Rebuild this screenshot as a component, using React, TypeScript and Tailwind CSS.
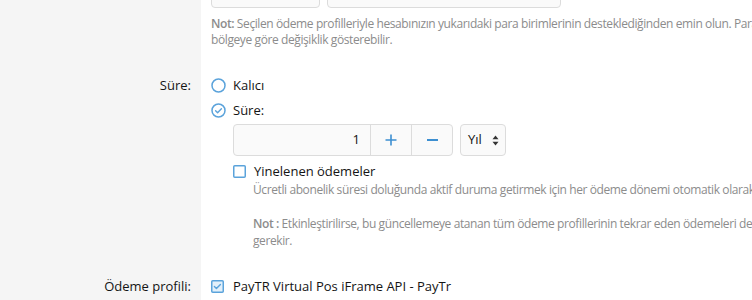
import React from 'react';

const font = { fontFamily: '"Segoe UI", "Open Sans", "Noto Sans", sans-serif' };

function Radio({ checked }: { checked?: boolean }) {
  return (
    <svg width="15" height="15" viewBox="0 0 15 15" className="shrink-0">
      <circle cx="7.5" cy="7.5" r="6.5" fill="white" stroke="#5ba3db" strokeWidth="1.5" />
      {checked && (
        <path d="M4.6 7.7l2 2 3.8-3.9" fill="none" stroke="#5ba3db" strokeWidth="1.4" strokeLinecap="round" strokeLinejoin="round" />
      )}
    </svg>
  );
}

function Check({ checked }: { checked?: boolean }) {
  return (
    <svg width="13" height="13" viewBox="0 0 13 13" className="shrink-0">
      <rect x="0.75" y="0.75" width="11.5" height="11.5" rx="1" fill={checked ? '#e3f0fa' : 'white'} stroke="#5ba3db" strokeWidth="1.5" />
      {checked && (
        <path d="M3.4 6.6l2 2 4-4.2" fill="none" stroke="#5ba3db" strokeWidth="1.4" strokeLinecap="round" strokeLinejoin="round" />
      )}
    </svg>
  );
}

function Row({ label, children, className = '' }: { label: string; children: React.ReactNode; className?: string }) {
  return (
    <div className="flex">
      <div className={`w-[201px] shrink-0 bg-[#f5f5f5] pr-[10px] text-right text-[13px] text-[#141414] ${className}`}>{label}</div>
      <div className={`flex-1 pl-[10px] ${className}`}>{children}</div>
    </div>
  );
}

export default function App() {
  return (
    <div className="w-[752px] h-[300px] overflow-hidden bg-white" style={font}>
      <div className="flex flex-col">
        {/* currency row, cut off at the top */}
        <div className="flex">
          <div className="w-[201px] shrink-0 bg-[#f5f5f5] h-[68px] relative">
            <span className="absolute right-[10px] top-[-14px] text-[13px] text-[#141414]">Para birimleri:</span>
          </div>
          <div className="flex-1 pl-[10px]">
            <div className="flex gap-[7px] -mt-[20px]">
              <div className="w-[109px] h-[28px] rounded-[4px] border border-[#dcdcdc] bg-[#fafafa]" />
              <div className="w-[234px] h-[28px] rounded-[4px] border border-[#dcdcdc] bg-[#fafafa]" />
            </div>
            <p className="mt-[8px] text-[12px] leading-[16px] tracking-[-0.4px] text-[#8c8c8c] whitespace-nowrap">
              <b className="font-semibold">Not:</b> Seçilen ödeme profilleriyle hesabınızın yukarıdaki para birimlerinin desteklediğinden emin olun. Para birimi desteği
              <br />
              bölgeye göre değişiklik gösterebilir.
            </p>
          </div>
        </div>

        {/* duration */}
        <Row label="Süre:" className="pt-[8px]">
          <div className="text-[13px] text-[#141414]">
            <div className="flex items-center gap-[7px] h-[19px]">
              <Radio />
              <span>Kalıcı</span>
            </div>
            <div className="flex items-center gap-[7px] h-[19px] mt-[6px]">
              <Radio checked />
              <span>Süre:</span>
            </div>
            <div className="pl-[22px] mt-[4px]">
              <div className="flex gap-[7px]">
                <div className="flex h-[32px] w-[220px] rounded-[4px] border border-[#dcdcdc] bg-[#fafafa] overflow-hidden">
                  <div className="flex-1 flex items-center justify-end pr-[10px] text-[13px] text-[#141414]">1</div>
                  <div className="w-[41px] border-l border-[#dcdcdc] flex items-center justify-center">
                    <svg width="12" height="12" viewBox="0 0 12 12">
                      <path d="M6 0.5v11M0.5 6h11" stroke="#3d8fd1" strokeWidth="1.6" />
                    </svg>
                  </div>
                  <div className="w-[41px] border-l border-[#dcdcdc] flex items-center justify-center">
                    <span className="block w-[11px] h-[2px] bg-[#3d8fd1]" />
                  </div>
                </div>
                <div className="flex h-[32px] w-[46px] items-center justify-between rounded-[4px] border border-[#dcdcdc] bg-[#fafafa] pl-[7px] pr-[6px] text-[13px]">
                  <span>Yıl</span>
                  <svg width="7" height="11" viewBox="0 0 7 11">
                    <path d="M3.5 0.5L6.5 4.3H0.5Z" fill="#333" />
                    <path d="M3.5 10.5L6.5 6.7H0.5Z" fill="#333" />
                  </svg>
                </div>
              </div>

              <div className="flex items-center gap-[8px] mt-[6px] h-[19px]">
                <Check />
                <span>Yinelenen ödemeler</span>
              </div>
              <div className="pl-[20px] text-[12px] leading-[17px] tracking-[-0.4px] text-[#8c8c8c] whitespace-nowrap">
                <p>Ücretli abonelik süresi doluğunda aktif duruma getirmek için her ödeme dönemi otomatik olarak ücretlendirilir.</p>
                <p className="mt-[17px]">
                  <b className="font-semibold">Not :</b> Etkinleştirilirse, bu güncellemeye atanan tüm ödeme profillerinin tekrar eden ödemeleri desteklemesi
                  <br />
                  gerekir.
                </p>
              </div>
            </div>
          </div>
        </Row>

        <Row label="" className="h-[28px]">
          <div />
        </Row>

        <Row label="Ödeme profili:">
          <div className="flex items-center gap-[9px] text-[13px] text-[#141414]">
            <Check checked />
            <span>PayTR Virtual Pos iFrame API - PayTr</span>
          </div>
        </Row>
        <Row label="" className="h-[40px]">
          <div />
        </Row>
      </div>
    </div>
  );
}
